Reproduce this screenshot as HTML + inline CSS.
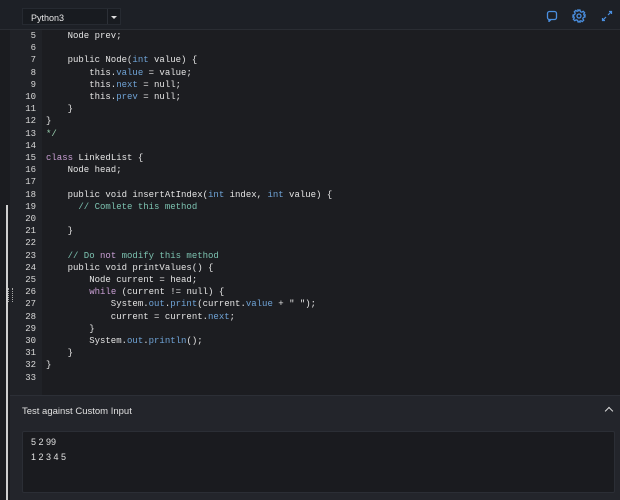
<!DOCTYPE html>
<html><head><style>
*{margin:0;padding:0;box-sizing:border-box}
body{width:620px;height:500px;background:#1b1c20;overflow:hidden;font-family:"Liberation Sans",sans-serif;position:relative}
.top{position:absolute;left:0;top:0;width:620px;height:30px;background:#1d2026;border-bottom:1px solid #2a2d33}
.dd{position:absolute;left:22px;top:8px;width:99px;height:17px;background:#181b20;border:1px solid #262a31;color:#e6e6e6;font-size:9px;padding:4px 0 0 8px}
.dd .s{position:absolute;left:84px;top:0;width:1px;height:15px;background:#2c3037}
.dd .a{position:absolute;left:88px;top:7px;width:0;height:0;border-left:3px solid transparent;border-right:3px solid transparent;border-top:3px solid #ddd}
.left{position:absolute;left:0;top:30px;width:10px;height:470px;background:#1b1c20}
.sb{position:absolute;left:6px;top:205px;width:2px;height:295px;background:#cfcfcf}
.grip{position:absolute;left:8px;top:288px;width:5px;height:14px;border-left:1px dotted #aaa;border-right:1px dotted #aaa}
.gut{position:absolute;left:10px;top:30px;width:32px;height:365px;background:#202227}
.ed{position:absolute;left:42px;top:30px;width:578px;height:365px;background:#1c1d21}
.code{position:absolute;left:0;top:30px;font-family:"Liberation Mono",monospace;font-size:9px;line-height:12.2px;color:#e4e4e4;white-space:pre}
.ln{position:absolute;left:10px;width:26px;text-align:right;color:#d8d8d8}
.tx{position:absolute;left:46px}
.k{color:#c99fd4}.b{color:#6fa3d6}.c{color:#7cc2b0}.g{color:#9ad1b0}
.bot{position:absolute;left:10px;top:395px;width:610px;height:105px;background:#23252b;border-top:1px solid #2c2f36}
.bt{position:absolute;left:12px;top:10px;font-size:9.5px;color:#e0e0e0}
.car{position:absolute;right:8px;top:12px;width:6px;height:6px;border-left:1.5px solid #ddd;border-top:1.5px solid #ddd;transform:rotate(45deg)}
.box{position:absolute;left:12px;top:35px;width:593px;height:62px;background:#1a1b1f;border:1px solid #2b2e35;border-radius:2px;font-size:9px;color:#e0e0e0;padding:3px 8px;line-height:15px}
</style></head><body>
<div class="top"><div class="dd">Python3<div class="s"></div><div class="a"></div></div>
<svg style="position:absolute;left:546px;top:10px" width="12" height="12" viewBox="0 0 12 12" fill="none" stroke="#4a8fe0" stroke-width="1.3"><rect x="1.5" y="1.5" width="9" height="8" rx="2"/><path d="M3 9.5 L3 11.5 L5 9.5"/></svg>
<svg style="position:absolute;left:572px;top:9px" width="14" height="14" viewBox="0 0 14 14" fill="none" stroke="#4a8fe0" stroke-width="1.3"><circle cx="7" cy="7" r="2"/><path d="M6 1h2l.4 1.6 1.4.6 1.4-.9 1.4 1.4-.9 1.4.6 1.4L13 6v2l-1.6.4-.6 1.4.9 1.4-1.4 1.4-1.4-.9-1.4.6L8 13H6l-.4-1.6-1.4-.6-1.4.9-1.4-1.4.9-1.4-.6-1.4L1 8V6l1.6-.4.6-1.4-.9-1.4 1.4-1.4 1.4.9 1.4-.6z"/></svg>
<svg style="position:absolute;left:601px;top:10px" width="12" height="12" viewBox="0 0 12 12" fill="none" stroke="#4a8fe0" stroke-width="1.2"><path d="M7 5 L10.5 1.5 M8 1.5h2.5v2.5 M5 7 L1.5 10.5 M1.5 8v2.5H4"/></svg>
</div>
<div class="left"></div><div class="gut"></div><div class="ed"></div>
<div class="sb"></div><div class="grip"></div>
<div class="code">
<div class="ln" style="top:0">5
6
7
8
9
10
11
12
13
14
15
16
17
18
19
20
21
22
23
24
25
26
27
28
29
30
31
32
33</div>
<div class="tx" style="top:0">    Node prev;

    public Node(<span class="b">int</span> value) {
        this.<span class="b">value</span> = value;
        this.<span class="b">next</span> = null;
        this.<span class="b">prev</span> = null;
    }
}
<span class="g">*/</span>

<span class="k">class</span> LinkedList {
    Node head;

    public void insertAtIndex(<span class="b">int</span> index, <span class="b">int</span> value) {
      <span class="c">// Comlete this method</span>

    }

    <span class="c">// Do <span class="k">not</span> modify this method</span>
    public void printValues() {
        Node current = head;
        <span class="k">while</span> (current != null) {
            System.<span class="b">out</span>.<span class="b">print</span>(current.<span class="b">value</span> + " ");
            current = current.<span class="b">next</span>;
        }
        System.<span class="b">out</span>.<span class="b">println</span>();
    }
}
</div></div>
<div class="bot"><div class="bt">Test against Custom Input</div><div class="car"></div>
<div class="box">5 2 99<br>1 2 3 4 5</div></div>
</body></html>
